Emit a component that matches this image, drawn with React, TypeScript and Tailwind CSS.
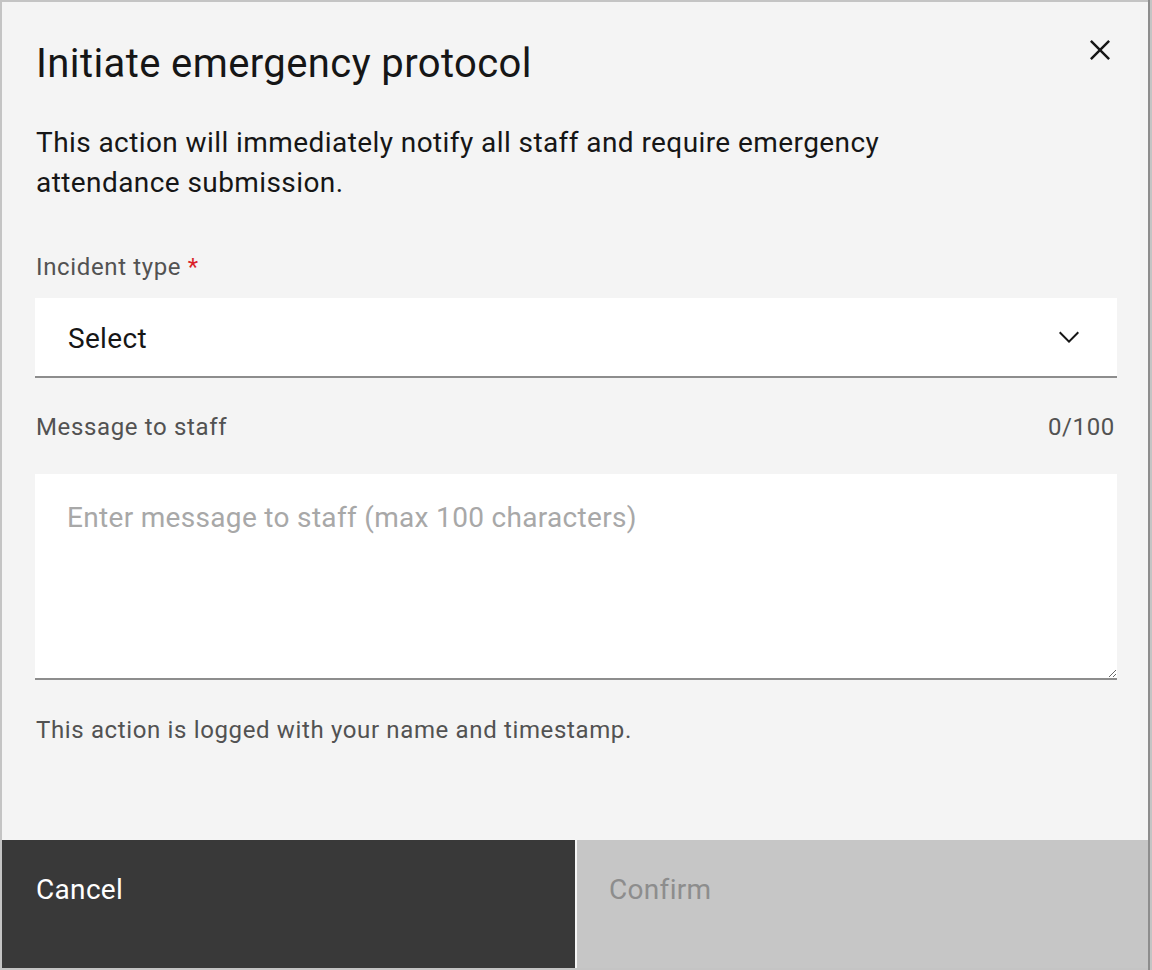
import React from "react";

export default function App() {
  const font = { fontFamily: 'Roboto, "Noto Sans", Arial, sans-serif' };
  return (
    <div className="w-[1152px] h-[970px] bg-[#c4c4c4] flex pt-[2px] pl-[2px] overflow-hidden" style={font}>
      <div className="w-[1146px] h-[966px] bg-[#f4f4f4] flex flex-col relative">
        <button className="absolute right-0 top-0 w-[96px] h-[96px] flex items-center justify-center text-[#161616]">
          <svg width="40" height="40" viewBox="0 0 32 32" fill="currentColor">
            <path d="M24 9.4L22.6 8 16 14.6 9.4 8 8 9.4 14.6 16 8 22.6 9.4 24 16 17.4 22.6 24 24 22.6 17.4 16 24 9.4z" />
          </svg>
        </button>
        <div className="flex-1 flex flex-col pl-[34px] pr-[31px]">
          <h2 className="mt-[34px] text-[40px] leading-[56px] tracking-[0.4px] text-[#161616] font-normal">
            Initiate emergency protocol
          </h2>
          <p className="mt-[31px] w-[890px] text-[28px] leading-[40px] tracking-[0.42px] text-[#161616]">
            This action will immediately notify all staff and require emergency attendance submission.
          </p>
          <div className="mt-[48px] text-[24px] leading-[32px] tracking-[0.64px] text-[#525252]">
            Incident type <span className="text-[#da1e28]">*</span>
          </div>
          <div className="mt-[15px] -ml-[1px] h-[80px] bg-white border-b-[2px] border-[#8d8d8d] flex items-center justify-between pl-[33px] pr-[32px]">
            <span className="pt-[4px] text-[28px] leading-[36px] tracking-[0.32px] text-[#161616]">Select</span>
            <svg width="32" height="32" viewBox="0 0 16 16" fill="#161616">
              <path d="M8 11L3 6 3.7 5.3 8 9.6 12.3 5.3 13 6z" />
            </svg>
          </div>
          <div className="mt-[33px] flex justify-between text-[24px] leading-[32px] tracking-[0.64px] text-[#525252]">
            <span>Message to staff</span>
            <span className="mr-[2px]">0/100</span>
          </div>
          <textarea
            className="mt-[31px] -ml-[1px] h-[206px] bg-white border-b-[2px] border-[#8d8d8d] outline-none px-[32px] pt-[24px] pb-[20px] text-[28px] leading-[40px] tracking-[0.32px] text-[#161616] placeholder:text-[#a8a8a8] resize-y"
            placeholder="Enter message to staff (max 100 characters)"
            style={font}
          />
          <div className="mt-[34px] text-[24px] leading-[32px] tracking-[0.64px] text-[#525252]">
            This action is logged with your name and timestamp.
          </div>
        </div>
        <div className="h-[128px] flex gap-[2px]">
          <button className="flex-1 bg-[#393939] text-white text-left pl-[34px] pt-[32px] flex items-start text-[28px] leading-[36px] tracking-[0.32px]">
            Cancel
          </button>
          <button className="flex-1 bg-[#c6c6c6] text-[#8d8d8d] text-left pl-[32px] pt-[32px] flex items-start text-[28px] leading-[36px] tracking-[0.32px]">
            Confirm
          </button>
        </div>
      </div>
      <div className="w-[2px] h-[970px] -mt-[2px] bg-[#8d8d8d]" />
    </div>
  );
}
